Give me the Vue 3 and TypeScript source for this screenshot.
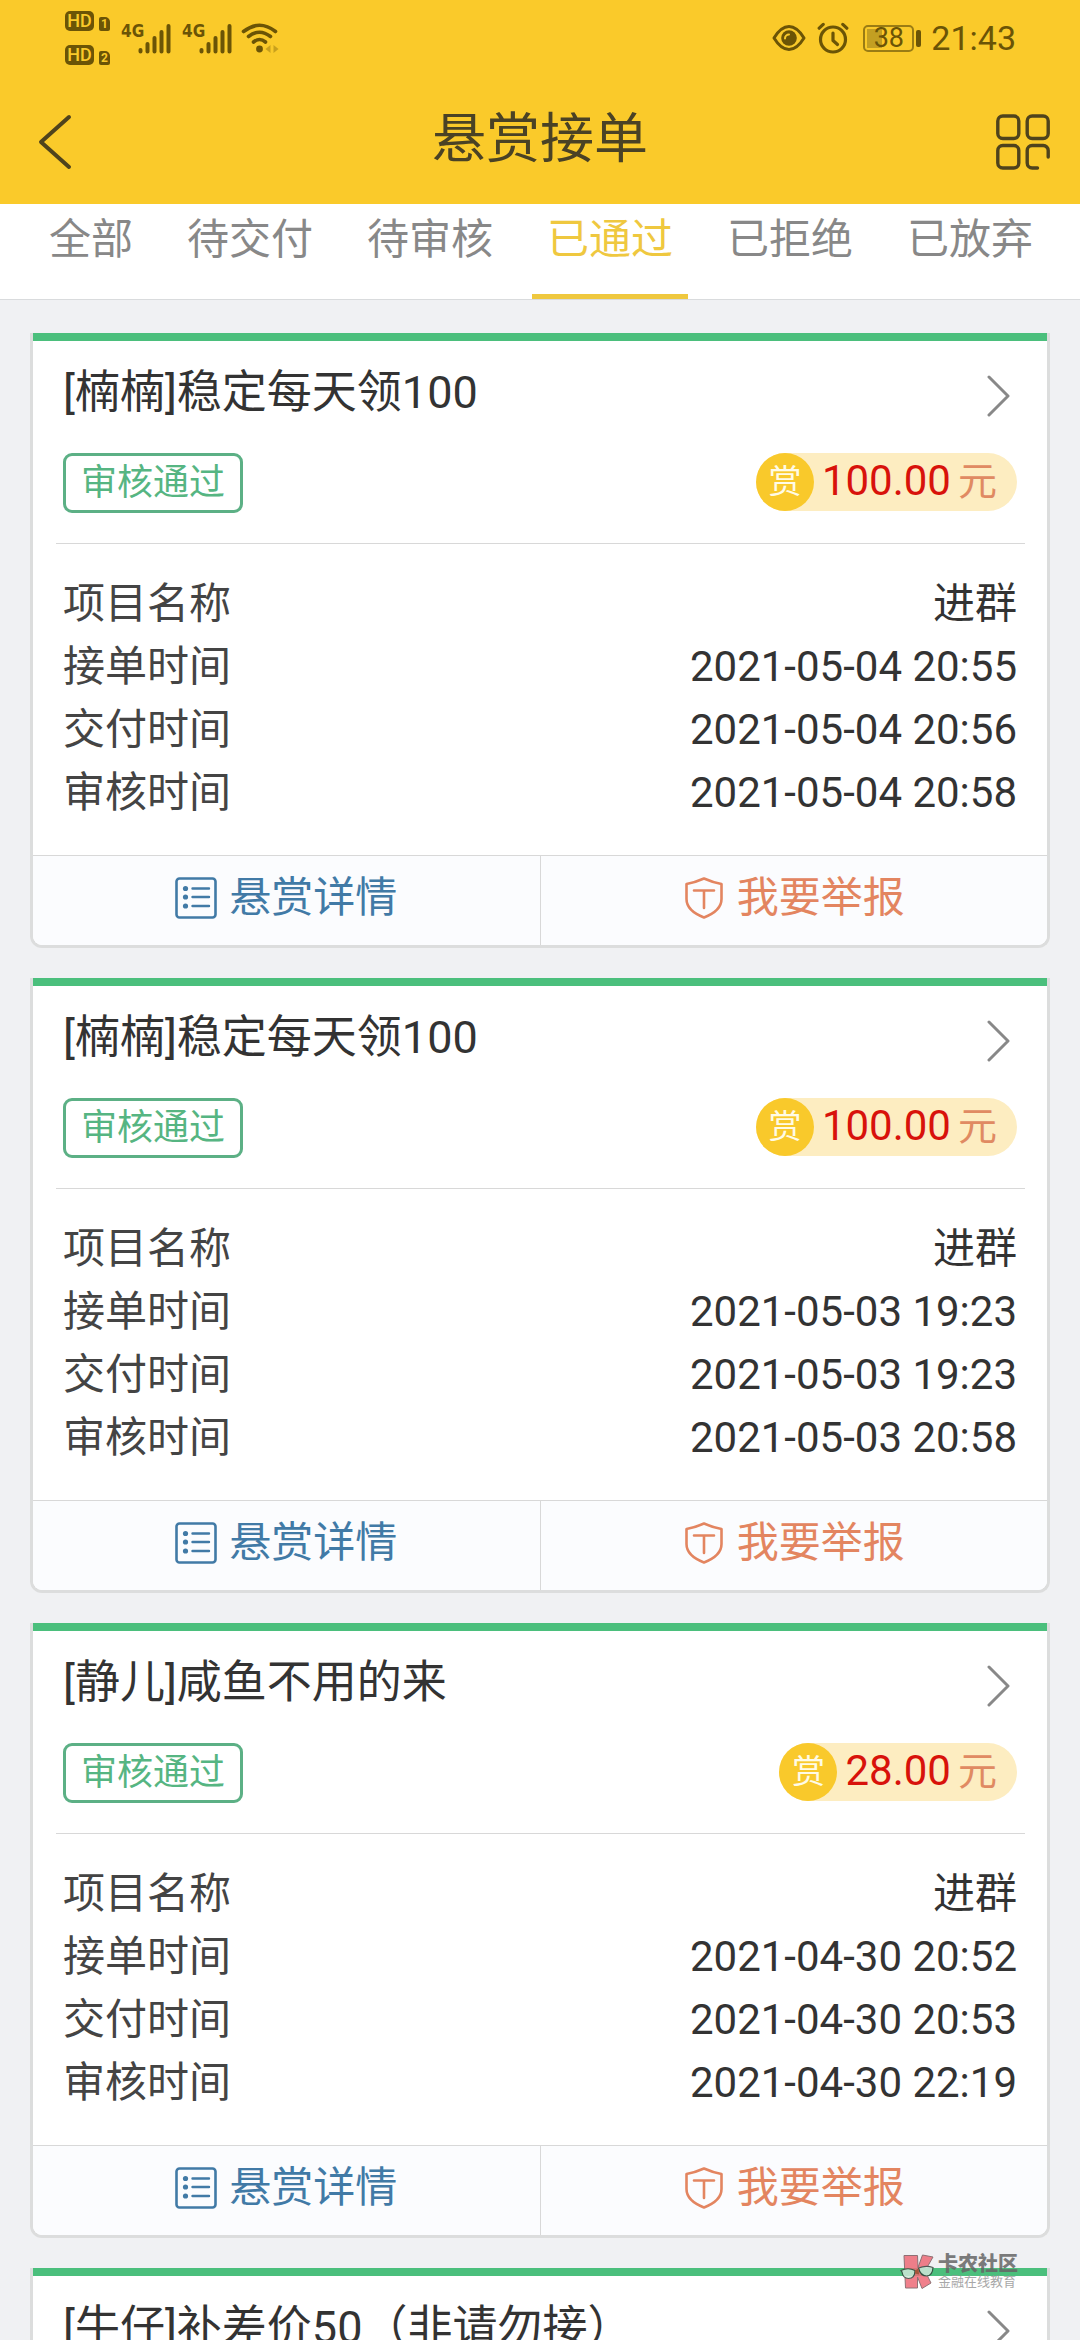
<script setup lang="ts">
import { ref } from 'vue'

interface Order {
  id: number
  title: string
  amount: string
  rows: { label: string; value: string }[]
}

const tabs: string[] = ['全部', '待交付', '待审核', '已通过', '已拒绝', '已放弃']
const activeTab = ref('已通过')

const makeRows = (taken: string, delivered: string, reviewed: string) => [
  { label: '项目名称', value: '进群' },
  { label: '接单时间', value: taken },
  { label: '交付时间', value: delivered },
  { label: '审核时间', value: reviewed },
]

const orders: Order[] = [
  {
    id: 1,
    title: '[楠楠]稳定每天领100',
    amount: '100.00',
    rows: makeRows('2021-05-04 20:55', '2021-05-04 20:56', '2021-05-04 20:58'),
  },
  {
    id: 2,
    title: '[楠楠]稳定每天领100',
    amount: '100.00',
    rows: makeRows('2021-05-03 19:23', '2021-05-03 19:23', '2021-05-03 20:58'),
  },
  {
    id: 3,
    title: '[静儿]咸鱼不用的来',
    amount: '28.00',
    rows: makeRows('2021-04-30 20:52', '2021-04-30 20:53', '2021-04-30 22:19'),
  },
  { id: 4, title: '[牛仔]补差价50（非请勿接）', amount: '', rows: [] },
]
</script>

<template>
  <div class="screen">
    <header class="top">
      <div class="status">
        <div class="status-left">
          <div class="sims">
            <div v-for="n in 2" :key="n" class="sim">
              <span class="hd">HD</span>
              <span class="slot">{{ n }}</span>
            </div>
          </div>
          <div v-for="n in 2" :key="n" class="signal">
            <span class="net">4G</span>
            <svg class="bars" viewBox="0 0 33 31" aria-hidden="true">
              <g stroke="currentColor" stroke-width="4" stroke-linecap="round">
                <path d="M2.500 27v1.500M9.500 21v7.500M16.500 15v13.500M23.500 9v19.500M30.500 3v25.500" />
              </g>
            </svg>
          </div>
          <svg class="wifi" viewBox="0 0 38 32" aria-hidden="true">
            <g fill="none" stroke="currentColor" stroke-width="3.600" stroke-linecap="round">
              <path d="M2.500 9.500Q18.500-3 34.500 9.500" />
              <path d="M7.500 14.500Q18.500 6 29.500 14.500" />
              <path d="M12.500 20Q18.500 15 24.500 20" />
            </g>
            <circle cx="18.500" cy="27" r="3.400" fill="currentColor" />
            <path d="M29.500 23v8l-5-4zM32.500 23v8l5-4z" fill="currentColor" opacity=".35" />
          </svg>
        </div>
        <div class="status-right">
          <svg class="eye" viewBox="0 0 34 28" aria-hidden="true">
            <path d="M2 14Q9 2.500 17 2.500T32 14Q25 25.500 17 25.500T2 14z" fill="none" stroke="currentColor" stroke-width="3" stroke-linejoin="round" />
            <circle cx="17" cy="14" r="7.800" fill="currentColor" />
            <path d="M13 14.500a4 4 0 0 1 4-4" fill="none" stroke="#faca2a" stroke-width="2" stroke-linecap="round" />
          </svg>
          <svg class="alarm" viewBox="0 0 32 32" aria-hidden="true">
            <g fill="none" stroke="currentColor" stroke-width="3.200" stroke-linecap="round" stroke-linejoin="round">
              <circle cx="16" cy="17.500" r="12.500" />
              <path d="M16 11v7.500l4.500 4" />
              <path d="M2.200 6.200l4-3.800M29.800 6.200l-4-3.800" />
            </g>
          </svg>
          <div class="battery"><span class="level">38</span></div>
          <span class="clock">21:43</span>
        </div>
      </div>
      <div class="nav">
        <button class="icon-button" type="button" aria-label="返回">
          <svg class="back" viewBox="0 0 54 56" aria-hidden="true">
            <path d="M39 3L11 28l28 25" fill="none" stroke="currentColor" stroke-width="4" stroke-linecap="round" stroke-linejoin="round" />
          </svg>
        </button>
        <h1>悬赏接单</h1>
        <button class="icon-button" type="button" aria-label="更多">
          <svg class="grid" viewBox="0 0 54 56" aria-hidden="true">
            <g fill="none" stroke="currentColor" stroke-width="3.400" stroke-linecap="round">
              <rect x="1.800" y="2" width="21" height="22.500" rx="5" />
              <rect x="31.200" y="2" width="21" height="22.500" rx="5" />
              <rect x="1.800" y="31.500" width="21" height="22.500" rx="5" />
              <path d="M41.500 54h-5.300a5 5 0 0 1-5-5V36.500a5 5 0 0 1 5-5h11a5 5 0 0 1 5 5v6.500" />
            </g>
          </svg>
        </button>
      </div>
    </header>

    <nav class="tabs">
      <button
        v-for="tab in tabs"
        :key="tab"
        type="button"
        class="tab"
        :class="{ active: tab === activeTab }"
        @click="activeTab = tab"
      >
        {{ tab }}
      </button>
    </nav>

    <main class="list">
      <article v-for="order in orders" :key="order.id" class="card">
        <div class="accent"></div>
        <a class="card-title" href="#">
          <h2>{{ order.title }}</h2>
          <svg class="chevron" viewBox="0 0 24 42" aria-hidden="true">
            <path d="M2 2l19 19L2 40" fill="none" stroke="currentColor" stroke-width="3" stroke-linecap="round" stroke-linejoin="round" />
          </svg>
        </a>
        <template v-if="order.rows.length">
          <div class="card-state">
            <span class="badge">审核通过</span>
            <div class="reward">
              <span class="coin">赏</span>
              <span class="amount">{{ order.amount }}</span>
              <span class="unit">元</span>
            </div>
          </div>
          <dl class="details">
            <div v-for="row in order.rows" :key="row.label" class="row">
              <dt>{{ row.label }}</dt>
              <dd>{{ row.value }}</dd>
            </div>
          </dl>
          <footer class="actions">
            <button type="button" class="action detail">
              <svg viewBox="0 0 42 42" aria-hidden="true">
                <rect x="1.500" y="1.500" width="39" height="39" rx="3" fill="none" stroke="currentColor" stroke-width="2.600" />
                <path d="M17.500 11.500H34M17.500 20H34M17.500 29H34" stroke="currentColor" stroke-width="2.400" stroke-linecap="round" />
                <g fill="currentColor">
                  <circle cx="10.500" cy="11.500" r="2.600" />
                  <circle cx="10.500" cy="20" r="2.600" />
                  <circle cx="10.500" cy="29" r="2.600" />
                </g>
              </svg>
              <span>悬赏详情</span>
            </button>
            <button type="button" class="action report">
              <svg viewBox="0 0 42 42" aria-hidden="true">
                <g fill="none" stroke="currentColor" stroke-width="2.600" stroke-linecap="round" stroke-linejoin="round">
                  <path d="M21 1.500Q30 5.500 38.500 7v15C38.500 31 30 37 21 40.500 12 37 3.500 31 3.500 22V7Q12 5.500 21 1.500z" />
                  <path d="M11 13.500h20M21 13.500v17.500" />
                </g>
              </svg>
              <span>我要举报</span>
            </button>
          </footer>
        </template>
      </article>
    </main>

    <div class="watermark">
      <svg viewBox="0 0 36 36" aria-hidden="true">
        <g fill="#ee6b77" stroke="#7d5a5e" stroke-width="1" stroke-linejoin="round">
          <path d="M5 1.500h13.500l.5 12L23.500 1l10.500 2-8 14L32 29l-9 5.500L18.500 23V34H6.500z" />
        </g>
        <g stroke="#33403a" stroke-width="1.200">
          <path d="M2 16.500Q9 13 16 16.500 16 24.500 9.500 24.500 4 24.500 3 18z" fill="#cfe8d9" />
          <path d="M19.500 14Q27 11 34 13.500 33.500 22 27.500 22 21.500 22 19.500 14z" fill="#cfe8d9" />
        </g>
        <path d="M16 16.500l3.500-2 .5 6-4-1z" fill="#b3442f" />
      </svg>
      <div class="mark-text">
        <strong>卡农社区</strong>
        <small>金融在线教育</small>
      </div>
    </div>
  </div>
</template>

<style>
body {
  margin: 0;
  background: #f0f1f3;
}
</style>

<style scoped>
.screen {
  position: relative;
  display: flex;
  flex-direction: column;
  height: 100vh;
  overflow: hidden;
  background: #f0f1f3;
  color: #333;
  font-family: Roboto, "Noto Sans CJK SC", sans-serif;
  font-size: 42px;
}

button {
  margin: 0;
  padding: 0;
  border: 0;
  background: none;
  color: inherit;
  font: inherit;
}

h1,
h2,
dl,
dd {
  margin: 0;
  font-weight: 400;
}

svg {
  display: block;
  flex: none;
}

.top {
  flex: none;
  background: #faca2a;
}

.status {
  display: flex;
  justify-content: space-between;
  height: 76px;
  padding: 0 64px 0 65px;
  color: #6b5406;
}

.status-left,
.status-right {
  display: flex;
  align-items: center;
}

.sims {
  display: flex;
  flex-direction: column;
  gap: 14px;
}

.sim {
  display: flex;
  align-items: flex-end;
  gap: 5px;
}

.hd {
  width: 29px;
  border-radius: 5px;
  background: #6b5406;
  color: #faca2a;
  font-size: 18px;
  font-weight: 500;
  line-height: 20px;
  text-align: center;
}

.slot {
  width: 11px;
  border-radius: 2px 5px 2px 2px;
  background: #6b5406;
  color: #faca2a;
  font-size: 12px;
  font-weight: 700;
  line-height: 14px;
  text-align: center;
}

.signal {
  display: flex;
  align-items: flex-start;
  margin-left: 11px;
}

.net {
  width: 17px;
  font-family: "Liberation Sans Narrow", "DejaVu Sans Condensed", sans-serif;
  font-size: 17px;
  font-weight: 700;
  line-height: 16px;
}

.bars {
  width: 33px;
  height: 31px;
}

.wifi {
  width: 38px;
  height: 32px;
  margin-left: 9px;
}

.eye {
  width: 34px;
  height: 28px;
}

.alarm {
  width: 32px;
  height: 32px;
  margin-left: 11px;
}

.battery {
  position: relative;
  box-sizing: border-box;
  width: 51px;
  margin: 0 17px 0 14px;
  border: 2px solid #9a7c14;
  border-radius: 5px;
  background: linear-gradient(to right, #c39f22 15px, transparent 15px) 2px 2px / 43px 19px no-repeat;
  font-size: 27px;
  line-height: 23px;
  text-align: center;
}

.battery::after {
  content: "";
  position: absolute;
  top: 3px;
  right: -9px;
  width: 5px;
  height: 17px;
  border-radius: 2px;
  background: #6b5406;
}

.clock {
  font-size: 34px;
}

.nav {
  display: flex;
  align-items: center;
  justify-content: space-between;
  height: 128px;
  padding: 0 30px;
  color: #4f431c;
}

.nav h1 {
  color: #4a4225;
  font-size: 54px;
  line-height: 80px;
}

.icon-button {
  padding-top: 4px;
}

.back,
.grid {
  width: 54px;
  height: 56px;
}

.tabs {
  display: flex;
  flex: none;
  justify-content: space-between;
  padding: 0 32px 0 34px;
  border-bottom: 1px solid #d9dbdd;
  background: #fff;
}

.tab {
  height: 95px;
  padding: 0 15px 18px;
  border-bottom: 5px solid transparent;
  color: #888;
  line-height: 72px;
  white-space: nowrap;
}

.tab.active {
  border-bottom-color: #efc83f;
  color: #efc83f;
}

.list {
  display: flex;
  flex: 1;
  flex-direction: column;
  gap: 30px;
  min-height: 0;
  padding: 33px 30px;
  overflow: hidden;
}

.card {
  flex: none;
  overflow: hidden;
  border: solid #dcdddd;
  border-width: 0 3px 3px;
  border-radius: 0 0 12px 12px;
  background: #fff;
}

.accent {
  height: 8px;
  background: #4bbf7c;
}

.card-title {
  display: flex;
  align-items: center;
  justify-content: space-between;
  height: 110px;
  padding: 0 36px 0 30px;
  color: #333;
  text-decoration: none;
}

.card-title h2 {
  padding-bottom: 6px;
  font-size: 45px;
  line-height: 66px;
}

.chevron {
  width: 24px;
  height: 42px;
  color: #888;
}

.card-state {
  display: flex;
  align-items: flex-start;
  justify-content: space-between;
  margin: 0 22px 0 23px;
  padding: 2px 8px 30px 7px;
  border-bottom: 1px solid #d8d8d8;
}

.badge {
  padding: 0 15px;
  border: 3px solid #5cb085;
  border-radius: 9px;
  color: #56b582;
  font-size: 36px;
  line-height: 54px;
}

.reward {
  display: flex;
  align-items: flex-start;
  height: 58px;
  padding-right: 20px;
  border-radius: 29px;
  background: #fdedc1;
  line-height: 58px;
}

.coin {
  width: 58px;
  border-radius: 50%;
  background: #f9c92b;
  color: #fffbe6;
  font-size: 33px;
  text-align: center;
}

.amount {
  margin: 0 7px 0 8px;
  color: #d8120b;
  line-height: 56px;
}

.unit {
  color: #e08a62;
  font-size: 39px;
}

.details {
  padding: 28px 30px 31px;
}

.row {
  display: flex;
  justify-content: space-between;
  line-height: 63px;
}

.row dt {
  color: #444;
}

.actions {
  display: flex;
  border-top: 1px solid #d8d8d8;
  background: #fbfcfe;
}

.action {
  display: flex;
  flex: 1;
  align-items: center;
  justify-content: center;
  gap: 12px;
  height: 89px;
  padding-bottom: 6px;
  line-height: 62px;
}

.action svg {
  width: 42px;
  height: 42px;
}

.detail {
  border-right: 1px solid #d8d8d8;
  color: #417aa6;
}

.report {
  color: #e38560;
}

.watermark {
  position: absolute;
  right: 62px;
  bottom: 50px;
  display: flex;
  align-items: center;
  gap: 3px;
  opacity: 0.85;
}

.watermark svg {
  width: 36px;
  height: 36px;
}

.mark-text {
  display: flex;
  flex-direction: column;
  color: #666;
}

.mark-text strong {
  font-size: 20px;
  font-weight: 900;
  line-height: 20px;
}

.mark-text small {
  color: #999;
  font-size: 13px;
  line-height: 16px;
}
</style>
